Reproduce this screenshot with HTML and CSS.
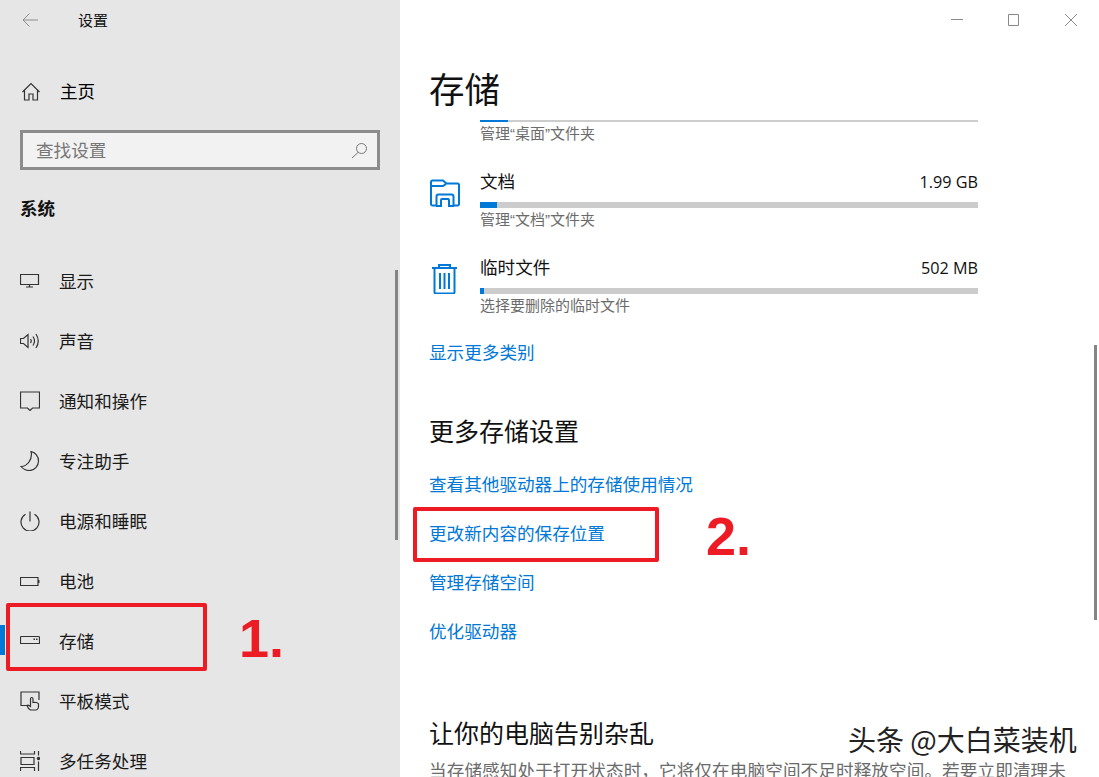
FILE: index.html
```html
<!DOCTYPE html>
<html lang="zh-CN">
<head>
<meta charset="utf-8">
<title>设置</title>
<link rel="stylesheet" href="styles.css">
</head>
<body>
<div class="window">
  <aside class="sidebar">
    <div class="app-bar">
      <svg class="back-icon" width="16" height="14" viewBox="0 0 16 14"><path d="M7.500 .5 1 7l6.500 6.500M1 7h15"/></svg>
      <span class="app-title">设置</span>
    </div>
    <div class="home-row">
      <svg class="nav-icon" width="20" height="20" viewBox="0 0 20 20"><path d="M2.500 11 11 2.500 19.500 11M4.500 9.500V19H9v-6h4v6h4.500V9.500"/></svg>
      <span>主页</span>
    </div>
    <div class="search">
      <span class="search-text">查找设置</span>
      <svg class="search-icon" width="17" height="17" viewBox="0 0 17 17"><circle cx="10.500" cy="6.500" r="5"/><path d="M7 10.500 1 16"/></svg>
    </div>
    <h2 class="group-title">系统</h2>
    <nav class="nav">
      <a class="nav-item">
        <svg class="nav-icon" width="20" height="20" viewBox="0 0 20 20"><path d="M.5 3.500h18v10H.5zM9.500 13.500v2.500M6 16h7"/></svg>
        <span>显示</span>
      </a>
      <a class="nav-item">
        <svg class="nav-icon" width="20" height="20" viewBox="0 0 20 20"><path d="M.5 7.500h3L8 3.500v13l-4.500-4h-3zM10.500 8q1.500 2 0 4M13 5.500q3 4.500 0 9M16 3q4.500 7 0 14"/></svg>
        <span>声音</span>
      </a>
      <a class="nav-item">
        <svg class="nav-icon" width="20" height="20" viewBox="0 0 20 20"><path d="M.5 1h19v16h-7L10 19.500 7.500 17h-7z"/></svg>
        <span>通知和操作</span>
      </a>
      <a class="nav-item">
        <svg class="nav-icon" width="20" height="20" viewBox="0 0 20 20"><path d="M11 .5c4.500 1 7.500 5 7.500 9.500 0 5-4 9.500-9 9.500-3.500 0-6.500-1.500-8.500-4 6 0 12-7 10-15z"/></svg>
        <span>专注助手</span>
      </a>
      <a class="nav-item">
        <svg class="nav-icon" width="20" height="20" viewBox="0 0 20 20"><path d="M5.500 3.200a9 9 0 1 0 9 0M10 .5v10"/></svg>
        <span>电源和睡眠</span>
      </a>
      <a class="nav-item">
        <svg class="nav-icon" width="20" height="20" viewBox="0 0 20 20"><path d="M.5 6.500h17.500v8H.5z"/><path class="solid" d="M18 9h1.500v3H18z"/></svg>
        <span>电池</span>
      </a>
      <a class="nav-item">
        <svg class="nav-icon" width="20" height="20" viewBox="0 0 20 20"><path d="M1.500 5.500h17a1 1 0 0 1 1 1v6H.5v-6a1 1 0 0 1 1-1z"/><path class="solid" d="M13.500 7.500h1.500V9h-1.500zM16 7.500h1.500V9H16z"/></svg>
        <span>存储</span>
      </a>
      <a class="nav-item">
        <svg class="nav-icon" width="20" height="20" viewBox="0 0 20 20"><path d="M8 14.500H1V1h18v8M10.500 19c-2-1-3-3-3.500-4.500 1-1 2 0 3.500 1V8c0-2 2.500-2 2.500 0v3.500c2-.5 5 0 5.500 1.500v2.500c0 2-1.500 3.500-2.500 3.500z"/></svg>
        <span>平板模式</span>
      </a>
      <a class="nav-item">
        <svg class="nav-icon" width="20" height="20" viewBox="0 0 20 20"><path d="M.5 0v3h14V0M1 6.500h13v7H1zM.5 20v-3.500h14V20M18.500 0v4.500M18.500 10.500V20"/><circle class="solid" cx="18.500" cy="7.500" r="1.700"/></svg>
        <span>多任务处理</span>
      </a>
    </nav>
    <div class="active-mark"></div>
    <div class="side-scroll"></div>
  </aside>

  <main class="content">
    <div class="window-controls">
      <svg width="12" height="12" viewBox="0 0 12 12"><path d="M0 5.500h12"/></svg>
      <svg width="12" height="12" viewBox="0 0 12 12"><path d="M.5 .5h10v11H.5z"/></svg>
      <svg width="12" height="12" viewBox="0 0 12 12"><path d="M0 0l12 12M12 0 0 12"/></svg>
    </div>
    <h1 class="page-title">存储</h1>

    <section class="storage-list">
      <div class="storage-item first">
        <div class="storage-body">
          <div class="bar thin"><div class="fill" style="width:5.700%"></div></div>
          <p class="caption">管理“桌面”文件夹</p>
        </div>
      </div>
      <div class="storage-item">
        <svg class="storage-icon" width="32" height="32" viewBox="0 0 32 32"><path d="M1 6a1.500 1.500 0 0 1 1.500-1.500H13L16.500 7.500H27.500A1.500 1.500 0 0 1 29 9V28A1.500 1.500 0 0 1 27.500 29.500H24M1 6V28A1.500 1.500 0 0 0 2.500 29.500H7M1 10H13L16.500 7.500M6.500 29.500V20.500a2 2 0 0 1 2-2H21.500a2 2 0 0 1 2 2v9M11 30v-6a1 1 0 0 1 1-1h6a1 1 0 0 1 1 1v6M6 30h6M18 30h6"/></svg>
        <div class="storage-body">
          <div class="storage-head"><span>文档</span><span class="size">1.99 GB</span></div>
          <div class="bar"><div class="fill" style="width:3.400%"></div></div>
          <p class="caption">管理“文档”文件夹</p>
        </div>
      </div>
      <div class="storage-item">
        <svg class="storage-icon" width="32" height="32" viewBox="0 0 32 32"><path d="M2 6h25M9 6V3h11v3M4.500 6v24a1.500 1.500 0 0 0 1.500 1.500h17a1.500 1.500 0 0 0 1.500-1.500V6M10 11v16M14.500 11v16M19 11v16"/></svg>
        <div class="storage-body">
          <div class="storage-head"><span>临时文件</span><span class="size">502 MB</span></div>
          <div class="bar"><div class="fill" style="width:0.800%"></div></div>
          <p class="caption">选择要删除的临时文件</p>
        </div>
      </div>
    </section>

    <a class="link more-link">显示更多类别</a>

    <h2 class="section-title more-title">更多存储设置</h2>
    <div class="link-list">
      <a class="link">查看其他驱动器上的存储使用情况</a>
      <a class="link">更改新内容的保存位置</a>
      <a class="link">管理存储空间</a>
      <a class="link">优化驱动器</a>
    </div>

    <h2 class="section-title clean-title">让你的电脑告别杂乱</h2>
    <p class="paragraph">当存储感知处于打开状态时，它将仅在电脑空间不足时释放空间。若要立即清理未</p>
    <div class="main-scroll"></div>
  </main>

  <div class="callout callout-one"></div>
  <div class="callout-num num-one">1.</div>
  <div class="callout callout-two"></div>
  <div class="callout-num num-two">2.</div>
  <div class="watermark">头条 @大白菜装机</div>
</div>
</body>
</html>
```

FILE: styles.css
```css
* { box-sizing: border-box; }
html, body { margin: 0; padding: 0; }
body {
  width: 1099px;
  height: 777px;
  overflow: hidden;
  background: #fff;
  font-family: "Noto Sans CJK SC", "Open Sans", sans-serif;
  font-size: 17.600px;
  line-height: 24px;
  color: #000;
}
.window { position: relative; display: flex; width: 1099px; height: 777px; overflow: hidden; }

.sidebar {
  position: relative;
  flex: 0 0 400px;
  height: 777px;
  overflow: hidden;
  padding-left: 20px;
  background: #e6e6e6;
  color: #1a1a1a;
}
.app-bar { display: flex; align-items: center; height: 40px; padding-left: 2px; }
.back-icon { fill: none; stroke: #8d8d8d; stroke-width: 1; }
.app-title { margin-left: 40px; font-size: 15px; color: #111; }
.home-row { display: flex; align-items: center; gap: 20px; height: 48px; margin-top: 27px; color: #000; }
.nav-icon { flex: none; fill: none; stroke: #333; stroke-width: 1.200; }
.solid { fill: #333; stroke: none; }
.search {
  display: flex;
  align-items: center;
  justify-content: space-between;
  width: 360px;
  height: 40px;
  margin-top: 15px;
  padding: 0 9px 0 13px;
  border: 3px solid #8c8c8c;
  background: #f2f2f2;
}
.search-text { color: #767676; }
.search-icon { fill: none; stroke: #777; stroke-width: 1; }
.group-title { margin: 26px 0 0; font-size: 17.500px; line-height: 24px; font-weight: 700; color: #111; }
.nav { margin-top: 31px; }
.nav-item { display: flex; align-items: center; gap: 19px; height: 60px; }
.active-mark { position: absolute; left: 0; top: 625px; width: 5px; height: 30px; background: #0078d7; }
.side-scroll { position: absolute; left: 395px; top: 270px; width: 3px; height: 270px; background: #858585; }

.content { position: relative; flex: 1; height: 777px; overflow: hidden; padding-left: 29px; }
.window-controls { display: flex; gap: 45px; justify-content: flex-end; padding: 14px 22px 0 0; height: 40px; }
.window-controls svg { fill: none; stroke: #8a8a8a; stroke-width: 1; }
.page-title { margin: 24px 0 8px; font-size: 35.500px; line-height: 48px; font-weight: 400; color: #111; }

.storage-list { margin-left: 1px; }
.storage-item { display: flex; margin-bottom: 26px; }
.storage-item.first { padding-left: 50px; }
.storage-icon { flex: none; margin: 6px 18px 0 0; fill: none; stroke: #0078d7; stroke-width: 2; }
.storage-body { width: 498px; }
.storage-head { display: flex; justify-content: space-between; height: 22px; margin-bottom: 10px; line-height: 22px; color: #111; }
.size { font-family: "Open Sans", sans-serif; font-size: 16.200px; line-height: 24px; }
.bar { height: 6px; background: #ccc; }
.bar.thin { height: 2px; }
.fill { height: 100%; background: #0078d7; }
.caption {
  margin: 2px 0 0;
  font-family: "Liberation Sans", "Noto Sans CJK SC", sans-serif;
  font-size: 15px;
  line-height: 20px;
  color: #6b6b6b;
}

.link { display: block; color: #0078d7; }
.more-link { margin-top: -2px; }
.section-title { margin: 0; font-size: 25px; line-height: 34px; font-weight: 400; color: #111; }
.more-title { margin-top: 49px; }
.link-list { display: flex; flex-direction: column; gap: 25px; margin-top: 25px; }
.clean-title { margin-top: 72px; }
.paragraph { margin: 9px 0 0; white-space: nowrap; letter-spacing: .1px; color: #6b6b6b; }
.main-scroll { position: absolute; right: 2px; top: 345px; width: 3px; height: 275px; background: #858585; }

.callout { position: absolute; border: 4px solid #ed1c24; border-radius: 2px; }
.callout-one { left: 6px; top: 603px; width: 201px; height: 68px; }
.callout-two { left: 413px; top: 507px; width: 246px; height: 55px; }
.callout-num {
  position: absolute;
  font-family: "Liberation Sans", sans-serif;
  font-size: 54px;
  line-height: 54px;
  font-weight: 700;
  color: #ed1c24;
}
.num-one { left: 239px; top: 611px; }
.num-two { left: 706px; top: 509px; }
.watermark {
  position: absolute;
  left: 848px;
  top: 721px;
  font-size: 28px;
  line-height: 36px;
  white-space: nowrap;
  color: #222;
  text-shadow: 1px 0 #fff, -1px 0 #fff, 0 1px #fff, 0 -1px #fff;
}
```
